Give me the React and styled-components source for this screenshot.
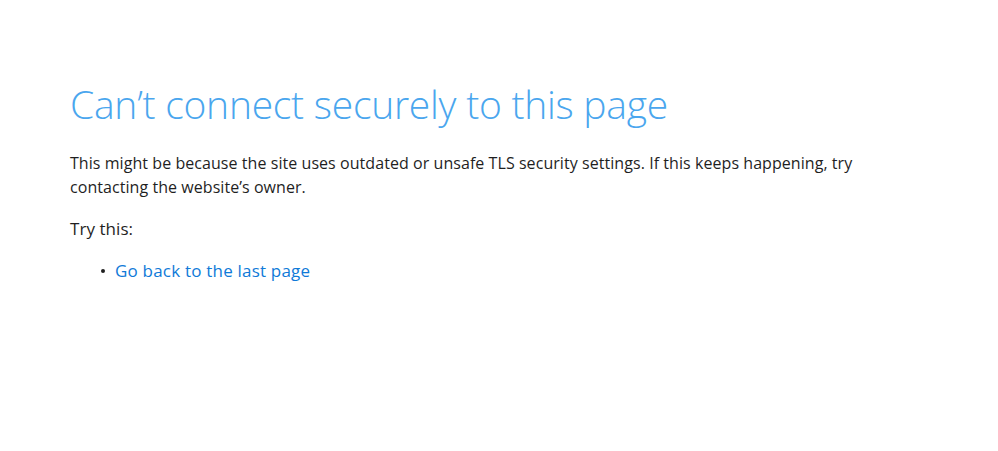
import styled, { createGlobalStyle } from "styled-components";

const GlobalStyle = createGlobalStyle`
  html, body {
    margin: 0;
    padding: 0;
    background: #fff;
  }
  body {
    font-family: "Open Sans", "Noto Sans", "Liberation Sans", sans-serif;
  }
`;

const Page = styled.main`
  width: 998px;
  height: 451px;
  box-sizing: border-box;
  padding: 78px 70px 0;
`;

const Title = styled.h1`
  margin: 0 0 21px;
  font-family: "Open Sans", "Noto Sans", sans-serif;
  font-weight: 300;
  font-size: 39px;
  line-height: 52px;
  letter-spacing: -0.25px;
  color: #4aa6ee;
`;

const Text = styled.p`
  margin: 0 0 18px;
  max-width: 800px;
  font-size: ${props => props.$size || 16}px;
  line-height: 24px;
  letter-spacing: 0.06px;
  color: #1f1f1f;
`;

const List = styled.ul`
  margin: 0;
  padding: 0 0 0 31px;
  list-style: none;
`;

const Item = styled.li`
  display: flex;
  align-items: center;
  gap: 10px;
  font-size: 17px;
  line-height: 24px;
  letter-spacing: 0.2px;

  &::before {
    content: "";
    width: 4px;
    height: 4px;
    border-radius: 50%;
    background: #1f1f1f;
  }
`;

const Link = styled.a`
  color: #0f7ad8;
  text-decoration: none;
  cursor: pointer;
`;

export default function App() {
  return (
    <>
      <GlobalStyle />
      <Page>
        <Title>Can’t connect securely to this page</Title>
        <Text>
          This might be because the site uses outdated or unsafe TLS security settings. If this keeps happening, try
          contacting the website’s owner.
        </Text>
        <Text $size={17}>Try this:</Text>
        <List>
          <Item>
            <Link>Go back to the last page</Link>
          </Item>
        </List>
      </Page>
    </>
  );
}
